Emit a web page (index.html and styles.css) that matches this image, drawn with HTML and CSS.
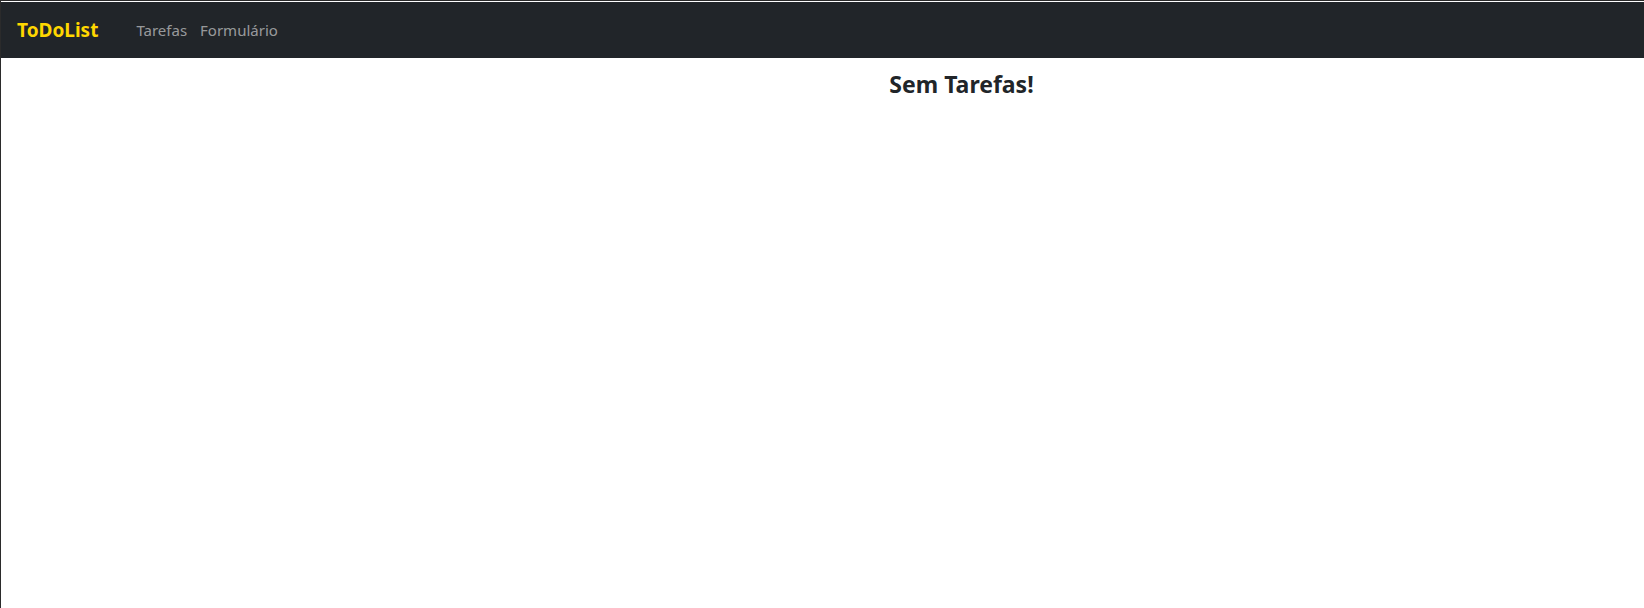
FILE: index.html
```html
<!DOCTYPE html>
<html lang="pt-BR">
<head>
<meta charset="utf-8">
<title>ToDoList</title>
<link rel="stylesheet" href="styles.css">
</head>
<body>
<div class="frame">
  <nav class="navbar">
    <a class="brand" href="#">ToDoList</a>
    <ul class="nav">
      <li><a class="nav-link" href="#">Tarefas</a></li>
      <li><a class="nav-link" href="#">Formulário</a></li>
    </ul>
  </nav>
  <main class="content">
    <h4 class="empty">Sem Tarefas!</h4>
  </main>
</div>
</body>
</html>
```
FILE: styles.css
```css
html, body {
  margin: 0;
  padding: 0;
  height: 100%;
  background: #ffffff;
}
body {
  font-family: "Noto Sans", "Open Sans", sans-serif;
  color: #212529;
}
.frame {
  min-height: 100%;
  box-sizing: border-box;
  border-top: 1px solid #2b2b2b;
  border-left: 1px solid #2b2b2b;
  padding-top: 1px;
}
.navbar {
  display: flex;
  align-items: center;
  height: 56px;
  background: #212529;
  padding: 0 16px;
}
.brand {
  color: #ffd700;
  font-weight: 700;
  font-size: 19px;
  text-decoration: none;
  margin-right: 38px;
}
.nav {
  display: flex;
  gap: 13px;
  list-style: none;
  margin: 0;
  padding: 0;
}
.nav-link {
  color: rgba(255, 255, 255, 0.55);
  text-decoration: none;
  font-size: 15px;
}
.content {
  padding-left: 278px;
  text-align: center;
}
.empty {
  margin: 13px 0 0;
  font-size: 23px;
  font-weight: 700;
  line-height: 1.2;
}
```
